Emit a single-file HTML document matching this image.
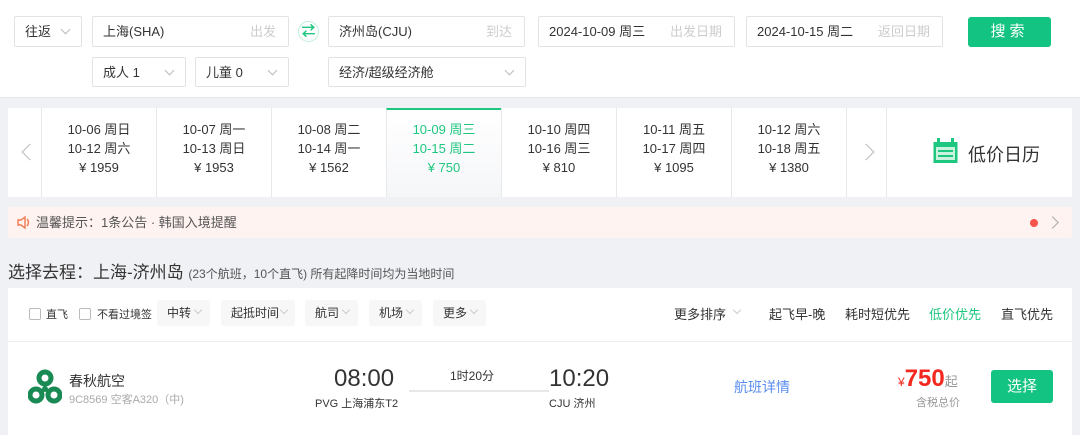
<!DOCTYPE html>
<html><head><meta charset="utf-8"><style>
*{box-sizing:border-box;margin:0;padding:0}
body{width:1080px;height:435px;overflow:hidden;background:#f0f1f5;font-family:"Liberation Sans","Noto Sans CJK SC",sans-serif;color:#333;position:relative}
.a{position:absolute}
.top{left:0;top:0;width:1080px;height:98px;background:#fff;border-bottom:1px solid #e6e6e6}
.box{position:absolute;border:1px solid #e3e3e3;border-radius:2px;background:#fff;font-size:13px;line-height:30px;padding-left:10px;color:#333}
.ph{position:absolute;right:12px;top:0;color:#ccc}
.chev{position:absolute;width:7px;height:7px;border-right:1px solid #bbb;border-bottom:1px solid #bbb;transform:rotate(45deg)}
.strip{left:8px;top:108px;width:1064px;height:89px;background:#fff}
.cell{position:absolute;top:0;width:115px;height:89px;border-left:1px solid #e8e8e8;text-align:center;font-size:13px;line-height:19px;padding-top:12px;color:#333}
.cell.on{color:#1ec77f;background:linear-gradient(#fff,#f5f6f8);border-top:2px solid #1ec77f;padding-top:10px}
.notice{left:8px;top:207px;width:1064px;height:31px;background:#fff3f1;border-radius:3px;font-size:13px;color:#555;line-height:31px;padding-left:28px}
.panel{left:8px;top:288px;width:1064px;height:147px;background:#fff}
.fb{position:absolute;top:12px;height:26px;background:#f7f7f7;border-radius:3px;font-size:12px;line-height:26px;padding-left:10px;color:#333}
.fb .chev{top:7px;left:38px;width:6px;height:6px;border-color:#ccc}
.cb{position:absolute;top:20px;width:12px;height:12px;border:1px solid #bbb;border-radius:2px}
.sort{position:absolute;top:16px;font-size:13px;color:#333}
</style></head><body>
<div class="a top"></div>
<div class="box" style="left:14px;top:16px;width:68px;height:31px">往返<span class="chev" style="right:12px;top:9px"></span></div>
<div class="box" style="left:92px;top:16px;width:197px;height:31px">上海(SHA)<span class="ph">出发</span></div>
<div class="a" style="left:298px;top:21px;width:21px;height:21px;border:1px solid #bfeed8;border-radius:50%;color:#1ec77f;font-size:14px;line-height:19px;text-align:center;font-weight:bold">⇄</div>
<div class="box" style="left:328px;top:16px;width:197px;height:31px">济州岛(CJU)<span class="ph">到达</span></div>
<div class="box" style="left:538px;top:16px;width:197px;height:31px">2024-10-09 周三<span class="ph">出发日期</span></div>
<div class="box" style="left:746px;top:16px;width:197px;height:31px">2024-10-15 周二<span class="ph">返回日期</span></div>
<div class="a" style="left:968px;top:17px;width:83px;height:30px;background:#13c381;border-radius:3px;color:#fff;font-size:15px;line-height:30px;text-align:center;letter-spacing:4px">搜索</div>
<div class="box" style="left:92px;top:57px;width:94px;height:30px">成人 1<span class="chev" style="right:12px;top:9px"></span></div>
<div class="box" style="left:195px;top:57px;width:94px;height:30px">儿童 0<span class="chev" style="right:12px;top:9px"></span></div>
<div class="box" style="left:328px;top:57px;width:198px;height:30px">经济/超级经济舱<span class="chev" style="right:12px;top:9px"></span></div>

<div class="a strip">
<div class="a" style="left:16px;top:38px;width:12px;height:12px;border-left:1.5px solid #bbb;border-bottom:1.5px solid #bbb;transform:rotate(45deg)"></div>
<div class="cell" style="left:33px">10-06 周日<br>10-12 周六<br>¥ 1959</div>
<div class="cell" style="left:148px">10-07 周一<br>10-13 周日<br>¥ 1953</div>
<div class="cell" style="left:263px">10-08 周二<br>10-14 周一<br>¥ 1562</div>
<div class="cell on" style="left:378px">10-09 周三<br>10-15 周二<br>¥ 750</div>
<div class="cell" style="left:493px">10-10 周四<br>10-16 周三<br>¥ 810</div>
<div class="cell" style="left:608px">10-11 周五<br>10-17 周四<br>¥ 1095</div>
<div class="cell" style="left:723px">10-12 周六<br>10-18 周五<br>¥ 1380</div>
<div class="cell" style="left:838px;width:40px"></div>
<div class="a" style="left:852px;top:38px;width:12px;height:12px;border-right:1.5px solid #bbb;border-top:1.5px solid #bbb;transform:rotate(45deg)"></div>
<div class="cell" style="left:878px;width:186px"></div>
<svg class="a" style="left:925px;top:30px" width="25" height="25" viewBox="0 0 25 25"><rect x="0.5" y="4" width="24" height="21" fill="#1ec77f"/><rect x="3" y="9" width="19" height="13" fill="#c9f2df"/><rect x="5" y="12" width="15" height="2" fill="#1ec77f"/><rect x="5" y="17" width="15" height="2" fill="#1ec77f"/><rect x="4" y="0" width="3" height="5" fill="#1ec77f"/><rect x="18" y="0" width="3" height="5" fill="#1ec77f"/></svg>
<div class="a" style="left:960px;top:33px;font-size:18px;color:#333">低价日历</div>
</div>

<div class="a notice">温馨提示：1条公告 · 韩国入境提醒
<svg class="a" style="left:9px;top:8px" width="14" height="15" viewBox="0 0 14 15"><path d="M1 5h3l4-3v11l-4-3H1z" fill="none" stroke="#f07a4f" stroke-width="1.4"/><path d="M10 4q3 3.5 0 7" fill="none" stroke="#f07a4f" stroke-width="1.4"/></svg>
<div class="a" style="left:1022px;top:12px;width:8px;height:8px;border-radius:50%;background:#f5554a"></div>
<div class="a" style="left:1040px;top:11px;width:9px;height:9px;border-right:1px solid #aaa;border-top:1px solid #aaa;transform:rotate(45deg)"></div>
</div>

<div class="a" style="left:8px;top:258px;font-size:17px;color:#333">选择去程：上海-济州岛 <span style="font-size:12px;color:#555">(23个航班，10个直飞) 所有起降时间均为当地时间</span></div>

<div class="a panel">
<div class="cb" style="left:21px"></div><div class="a" style="left:38px;top:18px;font-size:11px">直飞</div>
<div class="cb" style="left:71px"></div><div class="a" style="left:89px;top:18px;font-size:11px">不看过境签</div>
<div class="fb" style="left:149px;width:53px">中转<span class="chev"></span></div>
<div class="fb" style="left:213px;width:74px">起抵时间<span class="chev" style="left:60px"></span></div>
<div class="fb" style="left:297px;width:53px">航司<span class="chev"></span></div>
<div class="fb" style="left:361px;width:53px">机场<span class="chev"></span></div>
<div class="fb" style="left:425px;width:53px">更多<span class="chev"></span></div>
<div class="sort" style="left:666px">更多排序<span class="chev" style="left:60px;top:3px;width:6px;height:6px;border-color:#ccc"></span></div>
<div class="sort" style="left:761px">起飞早-晚</div>
<div class="sort" style="left:837px">耗时短优先</div>
<div class="sort" style="left:921px;color:#1ec77f">低价优先</div>
<div class="sort" style="left:993px">直飞优先</div>
<div class="a" style="left:0;top:53px;width:1064px;height:1px;background:#eee"></div>
<svg class="a" style="left:20px;top:81px" width="34" height="36" viewBox="0 0 34 36"><g fill="none" stroke="#1a8a55" stroke-width="5"><circle cx="17" cy="9" r="6"/><circle cx="8" cy="26" r="6"/><circle cx="26" cy="26" r="6"/></g><circle cx="17" cy="20" r="3" fill="#1a8a55"/></svg>
<div class="a" style="left:61px;top:83px;font-size:14px">春秋航空</div>
<div class="a" style="left:61px;top:103px;font-size:11px;color:#aaa">9C8569 空客A320（中)</div>
<div class="a" style="left:326px;top:77px;font-size:24px;color:#333">08:00</div>
<div class="a" style="left:307px;top:107px;font-size:11px;color:#333">PVG 上海浦东T2</div>
<div class="a" style="left:442px;top:79px;font-size:12px">1时20分</div>
<div class="a" style="left:401px;top:102px;width:140px;height:2px;background:#e8e8e8"></div>
<div class="a" style="left:541px;top:77px;font-size:24px;color:#333">10:20</div>
<div class="a" style="left:541px;top:107px;font-size:11px;color:#333">CJU 济州</div>
<div class="a" style="left:726px;top:89px;font-size:14px;color:#5b8def">航班详情</div>
<div class="a" style="left:890px;top:77px;color:#f3281f;font-size:12px">¥<span style="font-size:24px;font-weight:bold">750</span><span style="color:#999;font-size:13px">起</span></div>
<div class="a" style="left:908px;top:106px;font-size:11px;color:#999">含税总价</div>
<div class="a" style="left:983px;top:82px;width:62px;height:33px;background:#13c381;border-radius:3px;color:#fff;font-size:15px;line-height:33px;text-align:center">选择</div>
</div>
</body></html>
